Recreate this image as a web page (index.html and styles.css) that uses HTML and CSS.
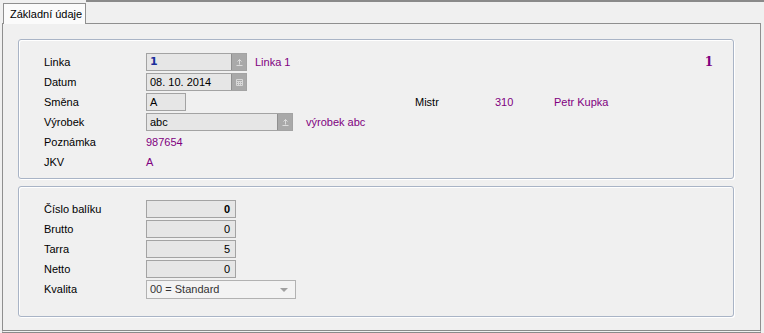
FILE: index.html
```html
<!DOCTYPE html>
<html lang="cs">
<head>
    <meta charset="UTF-8">
    <title>Základní údaje</title>
    <link rel="stylesheet" href="styles.css">
</head>
<body>
<div class="window">
    <div class="tabs">
        <div class="tab">Základní údaje</div>
        <div class="tab-rest"></div>
    </div>
    <div class="panel">
        <div class="group group-head">
            <div class="row">
                <span class="label">Linka</span>
                <span class="field w-101 lookup"><b class="code">1</b><i class="btn"><svg width="9" height="9" viewBox="0 0 9 9"><path d="M4.5 1.5v5M2.5 3.5l2-2 2 2M1.5 7.5h6" stroke="#dcdcdc" fill="none"/></svg></i></span>
                <span class="value ml-8">Linka 1</span>
                <span class="count">1</span>
            </div>
            <div class="row">
                <span class="label">Datum</span>
                <span class="field w-101 lookup">08. 10. 2014<i class="btn"><svg width="9" height="9" viewBox="0 0 9 9"><path d="M1.5 1.5h6v6h-6zM1.5 3.5h6M3.5 3.5v4M5.5 3.5v4M1.5 5.5h6" stroke="#d8d8d8" fill="none"/></svg></i></span>
            </div>
            <div class="row">
                <span class="label">Směna</span>
                <span class="field w-40">A</span>
                <span class="mistr">Mistr</span>
                <span class="value mistr-code">310</span>
                <span class="value">Petr Kupka</span>
            </div>
            <div class="row">
                <span class="label">Výrobek</span>
                <span class="field w-147 lookup">abc<i class="btn"><svg width="9" height="9" viewBox="0 0 9 9"><path d="M4.5 1.5v5M2.5 3.5l2-2 2 2M1.5 7.5h6" stroke="#dcdcdc" fill="none"/></svg></i></span>
                <span class="value ml-13">výrobek abc</span>
            </div>
            <div class="row">
                <span class="label">Poznámka</span>
                <span class="value">987654</span>
            </div>
            <div class="row">
                <span class="label">JKV</span>
                <span class="value">A</span>
            </div>
        </div>
        <div class="group group-pack">
            <div class="row">
                <span class="label">Číslo balíku</span>
                <span class="field w-90 num"><b>0</b></span>
            </div>
            <div class="row">
                <span class="label">Brutto</span>
                <span class="field w-90 num">0</span>
            </div>
            <div class="row">
                <span class="label">Tarra</span>
                <span class="field w-90 num">5</span>
            </div>
            <div class="row">
                <span class="label">Netto</span>
                <span class="field w-90 num">0</span>
            </div>
            <div class="row">
                <span class="label">Kvalita</span>
                <span class="select">00 = Standard<i class="arrow"></i></span>
            </div>
        </div>
    </div>
</div>
</body>
</html>
```

FILE: styles.css
```css
*{
    margin: 0;
    padding: 0;
    box-sizing: border-box;
}
body{
    width: 764px;
    height: 333px;
    background: #f0f0f0;
    font-family: "Liberation Sans", Tahoma, sans-serif;
    font-size: 11px;
    color: #000;
    overflow: hidden;
}
.window{
    padding: 0 3px 0 2px;
    height: 333px;
    display: flex;
    flex-direction: column;
}
.tabs{
    display: flex;
    height: 23px;
    flex-shrink: 0;
}
.tab{
    margin: 3px 0 -1px 1px;
    width: 83px;
    padding: 4px 0 0 6px;
    background: #fbfbfb;
    border: 1px solid #8f8f8f;
    border-bottom: none;
    position: relative;
    z-index: 1;
    white-space: nowrap;
    font-size: 11px;
}
.tab-rest{
    flex: 1;
    border-top: 2px solid #8a8a8a;
    margin-right: -3px;
}
.panel{
    flex: 1;
    border: 1px solid #8f8f8f;
    border-bottom: 3px double #8a8a8a;
    padding: 15px 26px 0 15px;
}
.group{
    border: 1px solid #a9b4c6;
    border-radius: 3px;
    box-shadow: 1px 1px 0 #fff, inset 1px 1px 0 #fff;
    padding: 12px 20px 7px 25px;
}
.group-head{
    height: 140px;
}
.group-pack{
    margin-top: 7px;
    height: 131px;
}
.row{
    display: flex;
    align-items: center;
    height: 20px;
}
.label{
    width: 102px;
    flex-shrink: 0;
}
.field{
    height: 18px;
    background: #e6e6e6;
    border: 1px solid #a3a3a3;
    padding: 0 3px;
    line-height: 16px;
    display: flex;
    align-items: center;
    white-space: nowrap;
}
.w-101{ width: 101px; }
.w-40{ width: 40px; }
.w-147{ width: 147px; }
.w-90{ width: 90px; }
.lookup{
    padding-right: 0;
}
.lookup .btn{
    margin-left: auto;
    width: 15px;
    height: 16px;
    background: #a9a9a9;
    border-left: 1px solid #8f8f8f;
    display: flex;
    align-items: center;
    justify-content: center;
}
.code{
    color: #1b2f9c;
    font-weight: bold;
    font-family: "DejaVu Sans", sans-serif;
    font-size: 11px;
}
.num{
    justify-content: flex-end;
    padding-right: 5px;
}
.value{
    color: #800080;
}
.ml-8{ margin-left: 8px; }
.ml-13{ margin-left: 13px; }
.count{
    margin-left: auto;
    color: #800080;
    font-weight: bold;
    font-family: "DejaVu Serif", serif;
    font-size: 12px;
}
.mistr{
    margin-left: 229px;
    width: 80px;
}
.mistr-code{
    width: 59px;
}
.select{
    width: 150px;
    height: 19px;
    background: #f3f3f3;
    border: 1px solid #b2b2b2;
    padding: 0 3px;
    display: flex;
    align-items: center;
    color: #333;
}
.select .arrow{
    margin-left: auto;
    margin-right: 4px;
    width: 0;
    height: 0;
    border-left: 4px solid transparent;
    border-right: 4px solid transparent;
    border-top: 4px solid #a0a0a0;
    margin-top: 2px;
}
```
